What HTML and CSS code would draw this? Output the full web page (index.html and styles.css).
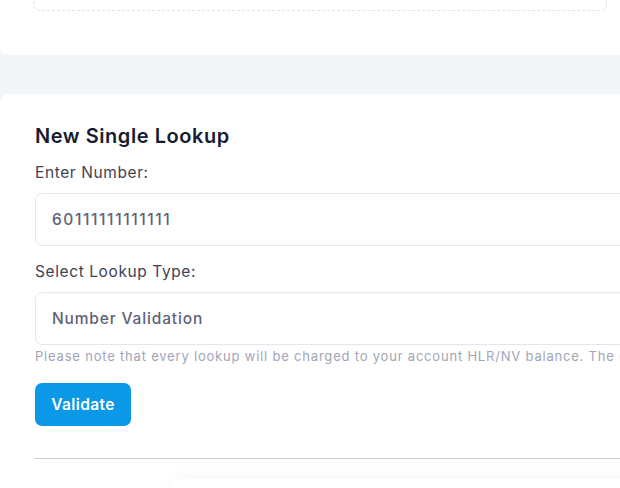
FILE: index.html
```html
<!DOCTYPE html>
<html lang="en">
<head>
<meta charset="utf-8">
<title>New Single Lookup</title>
<link rel="stylesheet" href="styles.css">
</head>
<body>
  <div class="page">
    <section class="card card-top">
      <div class="dropzone"></div>
    </section>

    <section class="card card-main">
      <h3 class="title">New Single Lookup</h3>
      <label class="form-label" for="num">Enter Number:</label>
      <div class="form-control digits" id="num">60111111111111</div>

      <label class="form-label label-gap" for="type">Select Lookup Type:</label>
      <div class="form-control" id="type">Number Validation</div>
      <p class="form-text">Please note that every lookup will be charged to your account HLR/NV balance. The default rate applies.</p>

      <button class="btn-primary" type="button">Validate</button>

      <hr class="separator">
      <div class="below">
        <div class="shadow-box"></div>
      </div>
    </section>
  </div>
</body>
</html>
```

FILE: styles.css
```css
* { box-sizing: border-box; }

html, body {
  margin: 0;
  padding: 0;
  background: #f3f6f9;
  overflow: hidden;
  height: 488px;
}

body {
  font-family: Inter, "Noto Sans", "Liberation Sans", sans-serif;
  color: #3f4254;
}

.page {
  width: 620px;
  height: 488px;
  overflow: hidden;
}

.card {
  background: #ffffff;
}

.card-top {
  height: 55px;
  border-bottom-left-radius: 8px;
  overflow: hidden;
}

.dropzone {
  margin: -12px 13px 0 33px;
  height: 23px;
  border: 1px dashed #e1e3ea;
  border-radius: 7px;
}

.card-main {
  margin-top: 39px;
  width: 660px;
  border-top-left-radius: 9px;
  padding: 30px 0 0 35px;
  height: 400px;
}

.title {
  margin: 0;
  font-size: 20px;
  line-height: 24px;
  font-weight: 600;
  letter-spacing: 0.55px;
  color: #181c32;
}

.form-label {
  display: block;
  margin-top: 14px;
  font-size: 15.5px;
  line-height: 22px;
  font-weight: 400;
  letter-spacing: 0.6px;
  color: #3f4254;
}

.label-gap {
  margin-top: 15px;
}

.form-control {
  margin-top: 9px;
  height: 53px;
  border: 1px solid #e4e6ef;
  border-radius: 7px;
  padding: 0 16px;
  display: flex;
  align-items: center;
  font-size: 15.5px;
  font-weight: 500;
  letter-spacing: 0.85px;
  color: #5e6278;
}

.digits {
  letter-spacing: 1.6px;
}

.form-text {
  margin: 2px 0 0;
  font-size: 13px;
  line-height: 18px;
  letter-spacing: 0.8px;
  color: #a1a5b7;
  white-space: nowrap;
}

.btn-primary {
  display: block;
  margin-top: 18px;
  height: 43px;
  width: 96px;
  border: 0;
  border-radius: 7px;
  background: #0b98e7;
  color: #ffffff;
  font-family: inherit;
  font-size: 15.5px;
  font-weight: 600;
  letter-spacing: 0.4px;
  padding: 0;
}

.separator {
  margin: 32px 0 0;
  border: 0;
  height: 1px;
  background: #c9cacf;
}

.below {
  padding: 20px 0 0 135px;
}

.shadow-box {
  height: 40px;
  border-radius: 12px;
  background: #ffffff;
  box-shadow: 0 -4px 16px rgba(0, 0, 0, 0.035);
}
```
